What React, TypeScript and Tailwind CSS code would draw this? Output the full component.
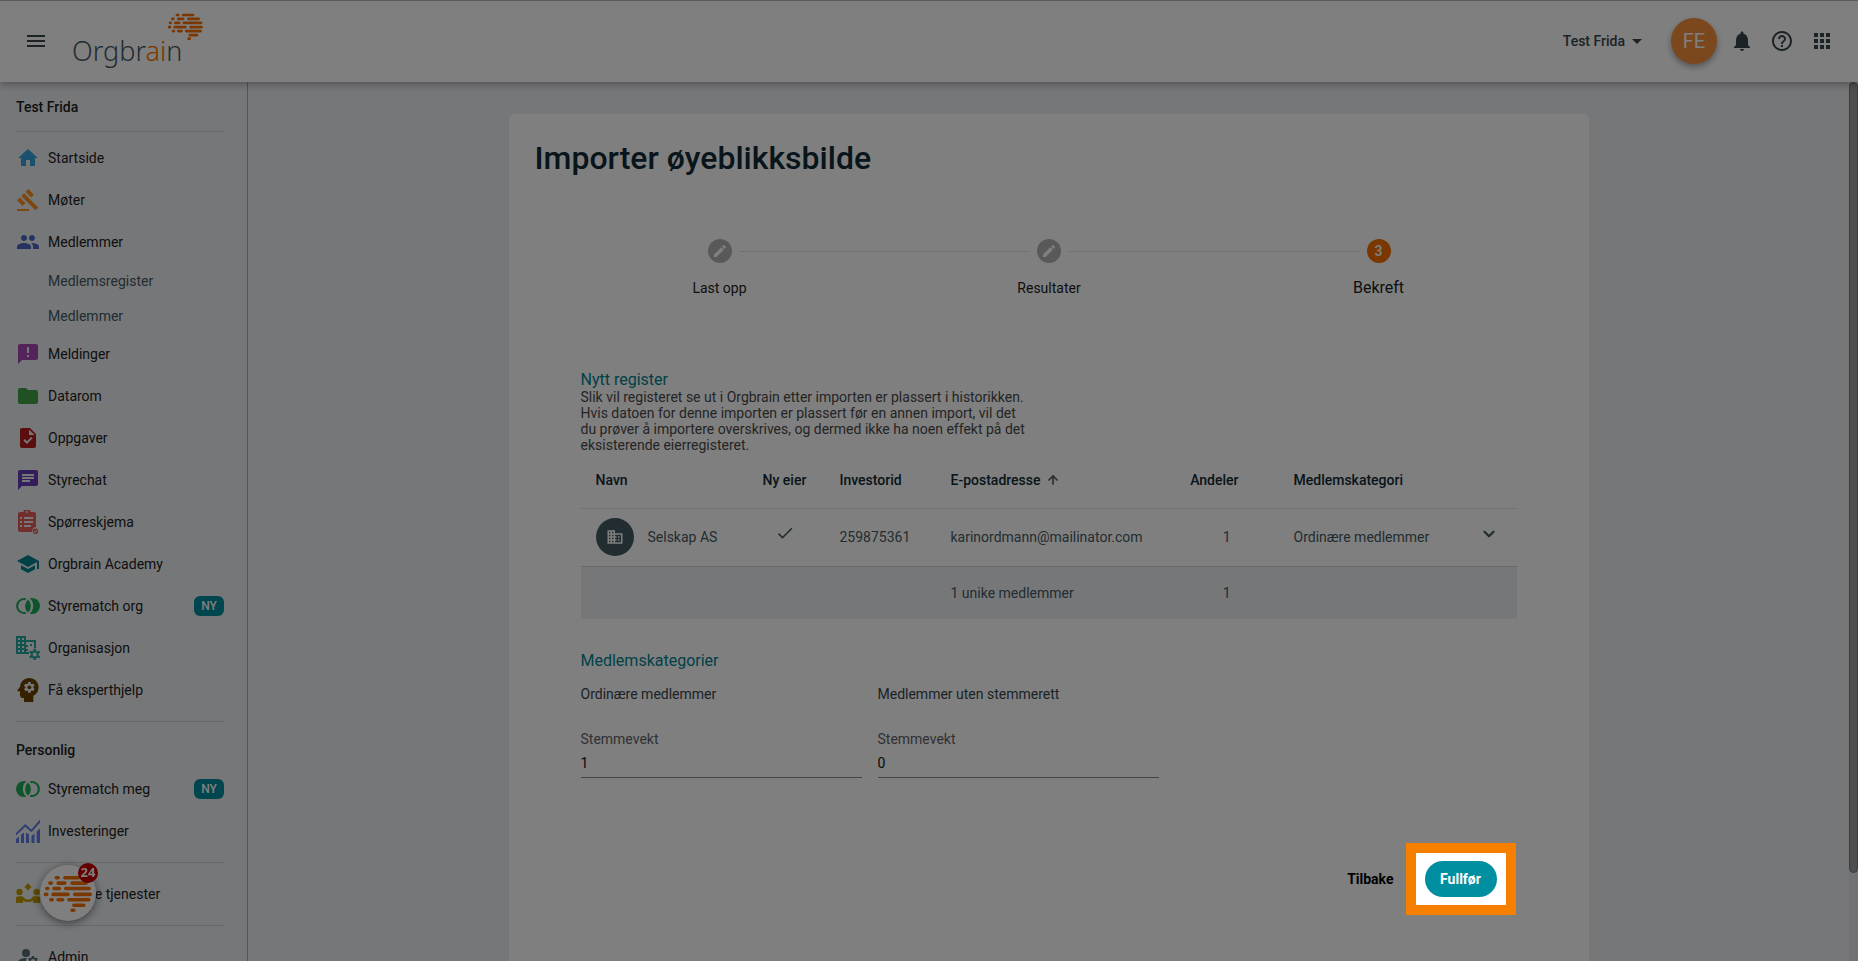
import React from "react";
import { ArrowUp, ChevronDown } from "lucide-react";
import {
    MdAnnouncement,
    MdApps,
    MdArrowDropDown,
    MdChat,
    MdCheck,
    MdDomain,
    MdEdit,
    MdFolder,
    MdGavel,
    MdHelpOutline,
    MdHome,
    MdManageAccounts,
    MdMenu,
    MdNotifications,
    MdPeople,
    MdPsychology,
    MdSchool,
    MdTask,
} from "react-icons/md";

function BrainMark({ className }: { className: string }) {
    return (
        <svg viewBox="0 0 110 82" className={className} stroke="#f57000" strokeWidth="8" strokeLinecap="round" fill="none" aria-hidden="true">
            <path d="M29 6h4M48 6h30M15 18h3M33 18h15M64 18h31M8 30h2M24 30h12M50 30h52M5 43h3M22 43h33M70 43h34M17 55h3M33 55h10M57 55h44M68 67h22M64 78h4" />
        </svg>
    );
}

function SurveyIcon({ className }: { className: string }) {
    return (
        <svg viewBox="0 0 24 24" className={className} fill="currentColor" aria-hidden="true">
            <path fillRule="evenodd" d="M4 2h3.500a3.500 3.500 0 0 1 7 0H18a2 2 0 0 1 2 2v13a5 5 0 0 0-4 5H4a2 2 0 0 1-2-2V4a2 2 0 0 1 2-2zm7-1a1 1 0 1 0 0 2 1 1 0 0 0 0-2zM4 7v2h2V7zm4 0v2h9V7zm-4 4v2h2v-2zm4 0v2h9v-2zm-4 4v2h2v-2zm4 0v2h7v-2z" />
            <path fillRule="evenodd" d="M19.500 18.500a2.700 2.700 0 1 1 0 5.400 2.700 2.700 0 0 1 0-5.400zm1.200 1.500-1.700 1.700-.7-.7-.6.6 1.300 1.300 2.300-2.300z" />
        </svg>
    );
}

function MatchIcon({ className, mirrored }: { className: string; mirrored?: boolean }) {
    return (
        <svg viewBox="0 0 24 24" className={className} fill="currentColor" aria-hidden="true">
            <g transform={mirrored ? "matrix(-1 0 0 1 24 0)" : undefined}>
                <path d="M9.800 5.200A7 7 0 1 0 9.800 18.800" fill="none" stroke="currentColor" strokeWidth="2" />
                <path d="M12 5.500a8.600 8.600 0 0 1 0 13 8.600 8.600 0 0 1 0-13z" />
                <path d="M13.800 4.300A8 8 0 1 1 13.800 19.700 10.500 10.500 0 0 0 13.800 4.300z" />
            </g>
        </svg>
    );
}

function OrganisationIcon({ className }: { className: string }) {
    return (
        <svg viewBox="0 0 24 24" className={className} fill="currentColor" aria-hidden="true">
            <path fillRule="evenodd" d="M0 0h10v4h10v8h-2V6h-8v3h2v2h-2v2h2v2h-2v3H0zM2 2v2h2V2zm4 0v2h2V2zM2 6v2h2V6zm4 0v2h2V6zm-4 4v2h2v-2zm4 0v2h2v-2zm-4 4v2h2v-2zm4 0v2h2v-2z" />
            <path d="M14 8h2v2h-2zM10 16h3v2h-3z" />
            <circle cx="18.700" cy="18.500" r="3" fill="none" stroke="currentColor" strokeWidth="1.800" />
            <path d="M18.700 15v-2.200M18.700 22v2.200M21.700 16.700l2-1.200M15.700 20.300l-2 1.200M21.700 20.300l2 1.200M15.700 16.700l-2-1.200" fill="none" stroke="currentColor" strokeWidth="2.400" />
        </svg>
    );
}

function InvestmentsIcon({ className }: { className: string }) {
    return (
        <svg viewBox="0 0 24 24" className={className} fill="currentColor" aria-hidden="true">
            <path d="M0 20l3-2.500V24H0zM5 16l3-2.500V24H5zM10 13.500l3 2V24h-3zM15.500 17l3-2.500V24h-3zM20.700 12.500L24 9.500V24h-3.300z" />
            <path d="M0 14l9.300-9 6 5.500L24 .5v3.200l-8.600 9.500-6.100-5.500L0 16.500z" />
        </svg>
    );
}

function ServicesIcon({ className }: { className: string }) {
    return (
        <svg viewBox="0 0 24 24" className={className} fill="currentColor" aria-hidden="true">
            <path d="M12 1l3.500 4L12 8.500 8.500 5z" />
            <circle cx="3.500" cy="10" r="3.200" />
            <circle cx="20.500" cy="10" r="3.200" />
            <path d="M0 16.500C0 15 1 14.300 2.300 14.300h3.200c1.200 0 2 .6 2.700 1.600 2 2 5.600 2 7.600 0 .7-1 1.500-1.600 2.700-1.600h3.200c1.300 0 2.300.7 2.300 2.200V21h-7v-2.500c-3 2-7 2-10 0V21H0z" />
        </svg>
    );
}

const orgItems = [
    { label: "Meldinger", icon: <MdAnnouncement className="size-6 text-[#a846b4]" /> },
    { label: "Datarom", icon: <MdFolder className="size-6 text-[#43a047]" /> },
    { label: "Oppgaver", icon: <MdTask className="size-6 text-[#b71c1c]" /> },
    { label: "Styrechat", icon: <MdChat className="size-6 text-[#673ab7]" /> },
    { label: "Spørreskjema", icon: <SurveyIcon className="size-6 text-[#e35d5b]" /> },
    { label: "Orgbrain Academy", icon: <MdSchool className="size-6 text-[#00838f]" /> },
    { label: "Styrematch org", icon: <MatchIcon className="size-6 text-[#1faa59]" />, badge: "NY" },
    { label: "Organisasjon", icon: <OrganisationIcon className="size-6 text-[#26a69a]" /> },
    { label: "Få eksperthjelp", icon: <MdPsychology className="-m-1 size-8 text-[#6b4300]" /> },
];

const personalItems = [
    { label: "Styrematch meg", icon: <MatchIcon mirrored className="size-6 text-[#1faa59]" />, badge: "NY" },
    { label: "Investeringer", icon: <InvestmentsIcon className="size-6 text-[#5c7ce6]" /> },
];

const steps = [
    { label: "Last opp", done: true },
    { label: "Resultater", done: true },
    { label: "Bekreft", done: false },
];

const categories = [
    { id: "weight-ordinary", name: "Ordinære medlemmer", weight: "1" },
    { id: "weight-nonvoting", name: "Medlemmer uten stemmerett", weight: "0" },
];

function NavItem({ label, icon, badge }: { label: string; icon: React.ReactNode; badge?: string }) {
    return (
        <a href="#" className="flex h-[42px] shrink-0 items-center gap-2 text-sm text-[#212121]">
            <span className="size-6 shrink-0">{icon}</span>
            <span className="grow">{label}</span>
            {badge && <span className="flex h-5 w-[30px] items-center justify-center rounded-md bg-[#008c9c] text-xs font-medium text-white">{badge}</span>}
        </a>
    );
}

function Divider() {
    return <hr className="my-[10px] shrink-0 border-[#cfd1d5]" />;
}

function Header() {
    return (
        <header className="relative z-10 flex h-[82px] shrink-0 items-center border-t border-[#b5b5b5] bg-white px-6 pb-0.5 text-[#37474f] shadow-[0_2px_8px_rgba(0,0,0,0.35)]">
            <button aria-label="Meny" className="mr-6">
                <MdMenu className="size-6" />
            </button>
            <a href="#" aria-label="Orgbrain" className="relative font-['Noto_Sans',sans-serif] text-[27px] font-light leading-10 text-[#455a64]">
                <span className="inline-block pt-5">
                    Orgbr<span className="text-[#f57000]">ai</span>n
                </span>
                <BrainMark className="absolute left-[95px] top-0.5 h-[27px] w-[37px]" />
            </a>
            <button className="ml-auto flex items-center text-sm font-medium">
                Test Frida <MdArrowDropDown className="size-6" />
            </button>
            <button className="ml-[22px] mr-[13px] size-[46px] rounded-full bg-[#f68f3b] text-xl text-white shadow-[0_3px_6px_rgba(0,0,0,0.35)]">FE</button>
            <div className="flex gap-4">
                <button aria-label="Varsler"><MdNotifications className="size-6" /></button>
                <button aria-label="Hjelp"><MdHelpOutline className="size-6" /></button>
                <button aria-label="Apper"><MdApps className="size-6" /></button>
            </div>
        </header>
    );
}

function Sidebar() {
    return (
        <nav className="flex w-[248px] shrink-0 flex-col overflow-hidden border-r border-[#a9abae] pl-4 pr-[23px]">
            <h2 className="flex h-[49px] shrink-0 items-center text-sm font-medium text-[#212121]">Test Frida</h2>
            <hr className="mb-[5px] shrink-0 border-[#cfd1d5]" />
            <NavItem label="Startside" icon={<MdHome className="size-6 text-[#36a3dc]" />} />
            <NavItem label="Møter" icon={<MdGavel className="size-6 text-[#f8901f]" />} />
            <NavItem label="Medlemmer" icon={<MdPeople className="size-6 text-[#4a67c0]" />} />
            <a href="#" className="flex h-[35px] shrink-0 items-center pl-8 text-sm text-[#455a64]">Medlemsregister</a>
            <a href="#" className="flex h-[35px] shrink-0 items-center pl-8 text-sm text-[#455a64]">Medlemmer</a>
            {orgItems.map((item) => (
                <NavItem key={item.label} {...item} />
            ))}
            <Divider />
            <h2 className="flex h-9 shrink-0 items-center text-sm font-medium text-[#212121]">Personlig</h2>
            {personalItems.map((item) => (
                <NavItem key={item.label} {...item} />
            ))}
            <Divider />
            <NavItem label="Eksterne tjenester" icon={<ServicesIcon className="size-6 text-[#c29b00]" />} />
            <Divider />
            <NavItem label="Admin" icon={<MdManageAccounts className="size-6 text-[#546e7a]" />} />
        </nav>
    );
}

function Stepper() {
    return (
        <ol className="mt-[61px] flex pl-[127px] pr-[126px]">
            {steps.map((step, index) => (
                <React.Fragment key={step.label}>
                    {index > 0 && <li aria-hidden="true" className="mx-2 mt-3 h-px grow bg-[#dedede]" />}
                    <li className="flex w-6 flex-col items-center gap-[13px] whitespace-nowrap text-[#212121]">
                        {step.done ? (
                            <span className="flex size-6 shrink-0 items-center justify-center rounded-full bg-[#b3b3b3] text-white">
                                <MdEdit className="size-4" />
                            </span>
                        ) : (
                            <span className="flex size-6 shrink-0 items-center justify-center rounded-full bg-[#f57000] text-sm font-medium text-white">{index + 1}</span>
                        )}
                        <span className={step.done ? "text-sm leading-6" : "text-base leading-6"}>{step.label}</span>
                    </li>
                </React.Fragment>
            ))}
        </ol>
    );
}

function RegisterTable() {
    return (
        <table className="w-full table-fixed text-left text-sm text-[#455a64]">
            <colgroup>
                <col className="w-[164px]" />
                <col className="w-20" />
                <col className="w-[111px]" />
                <col />
                <col className="w-[104px]" />
                <col className="w-[182px]" />
                <col className="w-14" />
            </colgroup>
            <thead>
                <tr className="h-[55px] border-b border-[#dedede] text-[#102a35]">
                    <th className="pl-[15px] font-medium">Navn</th>
                    <th className="text-center font-medium">Ny eier</th>
                    <th className="pl-[15px] font-medium">Investorid</th>
                    <th className="pl-[15px] font-medium" aria-sort="ascending">
                        <span className="flex items-center gap-[5px]">
                            E-postadresse <ArrowUp className="size-[14px] text-[#616161]" strokeWidth={3} />
                        </span>
                    </th>
                    <th className="pr-[40px] text-right font-medium">Andeler</th>
                    <th className="pl-[15px] font-medium">Medlemskategori</th>
                    <th aria-label="Detaljer" />
                </tr>
            </thead>
            <tbody>
                <tr className="h-[58px] border-b border-[#d0d0d0]">
                    <td className="pl-[15px]">
                        <span className="flex items-center gap-[14px]">
                            <span className="flex size-[38px] items-center justify-center rounded-full bg-[#455a64] text-white">
                                <MdDomain className="size-[18px]" />
                            </span>
                            Selskap AS
                        </span>
                    </td>
                    <td className="pb-2"><MdCheck className="mx-auto size-5" /></td>
                    <td className="pl-[15px]">259875361</td>
                    <td className="pl-[15px]">karinordmann@mailinator.com</td>
                    <td className="pr-[48px] text-right">1</td>
                    <td className="pl-[15px]">Ordinære medlemmer</td>
                    <td className="pb-2 text-center">
                        <button aria-label="Vis detaljer" className="align-middle"><ChevronDown className="size-[18px]" strokeWidth={3} /></button>
                    </td>
                </tr>
            </tbody>
            <tfoot>
                <tr className="h-[53px] bg-[#eceff3]">
                    <td colSpan={3} />
                    <td className="pl-[15px]">1 unike medlemmer</td>
                    <td className="pr-[48px] text-right">1</td>
                    <td colSpan={2} />
                </tr>
            </tfoot>
        </table>
    );
}

export default function App() {
    return (
        <div className="flex h-screen flex-col overflow-hidden bg-[#edeff3] font-[Roboto,sans-serif]">
            <Header />
            <div className="flex min-h-0 grow">
                <Sidebar />
                <main className="grow overflow-hidden pt-8">
                    <div className="mx-auto min-h-full max-w-[1080px] rounded-md bg-white px-[72px] pb-16 pt-6">
                        <h1 className="-ml-[46px] text-[32px] font-medium leading-10 text-[#102a35]">Importer øyeblikksbilde</h1>
                        <Stepper />

                        <section className="mt-[71px]">
                            <h2 className="text-base leading-[18px] text-[#00838f]">Nytt register</h2>
                            <p className="max-w-[450px] text-sm leading-4 text-[#4a4a4a]">
                                Slik vil registeret se ut i Orgbrain etter importen er plassert i historikken. Hvis datoen for denne importen er plassert før en annen import, vil det du prøver å importere overskrives, og dermed ikke ha noen effekt på det eksisterende eierregisteret.
                            </p>
                            <RegisterTable />
                        </section>

                        <section className="mt-[33px]">
                            <h2 className="text-base leading-[18px] text-[#00838f]">Medlemskategorier</h2>
                            <div className="mt-[14px] flex gap-4">
                                {categories.map((category) => (
                                    <div key={category.id} className="w-[281px]">
                                        <h3 className="text-sm text-[#37474f]">{category.name}</h3>
                                        <label htmlFor={category.id} className="mt-[25px] block text-sm text-[#5f6368]">Stemmevekt</label>
                                        <input id={category.id} defaultValue={category.weight} className="h-[29px] w-full border-b border-[#8a8a8a] text-sm text-[#111]" />
                                    </div>
                                ))}
                            </div>
                        </section>

                        <div className="mt-[65px] flex items-center justify-end gap-3 pr-px text-sm font-bold">
                            <button className="text-black">Tilbake</button>
                            {/* Highlighted target sits above the backdrop */}
                            <div className="relative z-50 border-10 border-[#f77f00] bg-white px-[9px] py-2">
                                <button className="h-9 w-[72px] rounded-full bg-[#008fa0] text-white">Fullfør</button>
                            </div>
                        </div>
                    </div>
                </main>
                <div className="w-[9px] shrink-0 bg-[#e4e5e8]">
                    <div className="h-[90%] rounded-[5px] border border-[#6d7880] bg-[#9c9c9c]" />
                </div>
            </div>

            <button aria-label="Åpne chat" className="fixed bottom-10 left-10 z-30 flex size-14 items-center justify-center rounded-full bg-white shadow-[0_2px_8px_rgba(0,0,0,0.5)]">
                <BrainMark className="h-[37px] w-[50px]" />
                <span className="absolute -right-0.5 -top-0.5 flex size-5 items-center justify-center rounded-full bg-[#c40000] font-['Open_Sans',sans-serif] text-[13px] font-bold text-white">24</span>
            </button>

            {/* Backdrop */}
            <div className="fixed inset-0 z-40 bg-black/50" />
        </div>
    );
}
